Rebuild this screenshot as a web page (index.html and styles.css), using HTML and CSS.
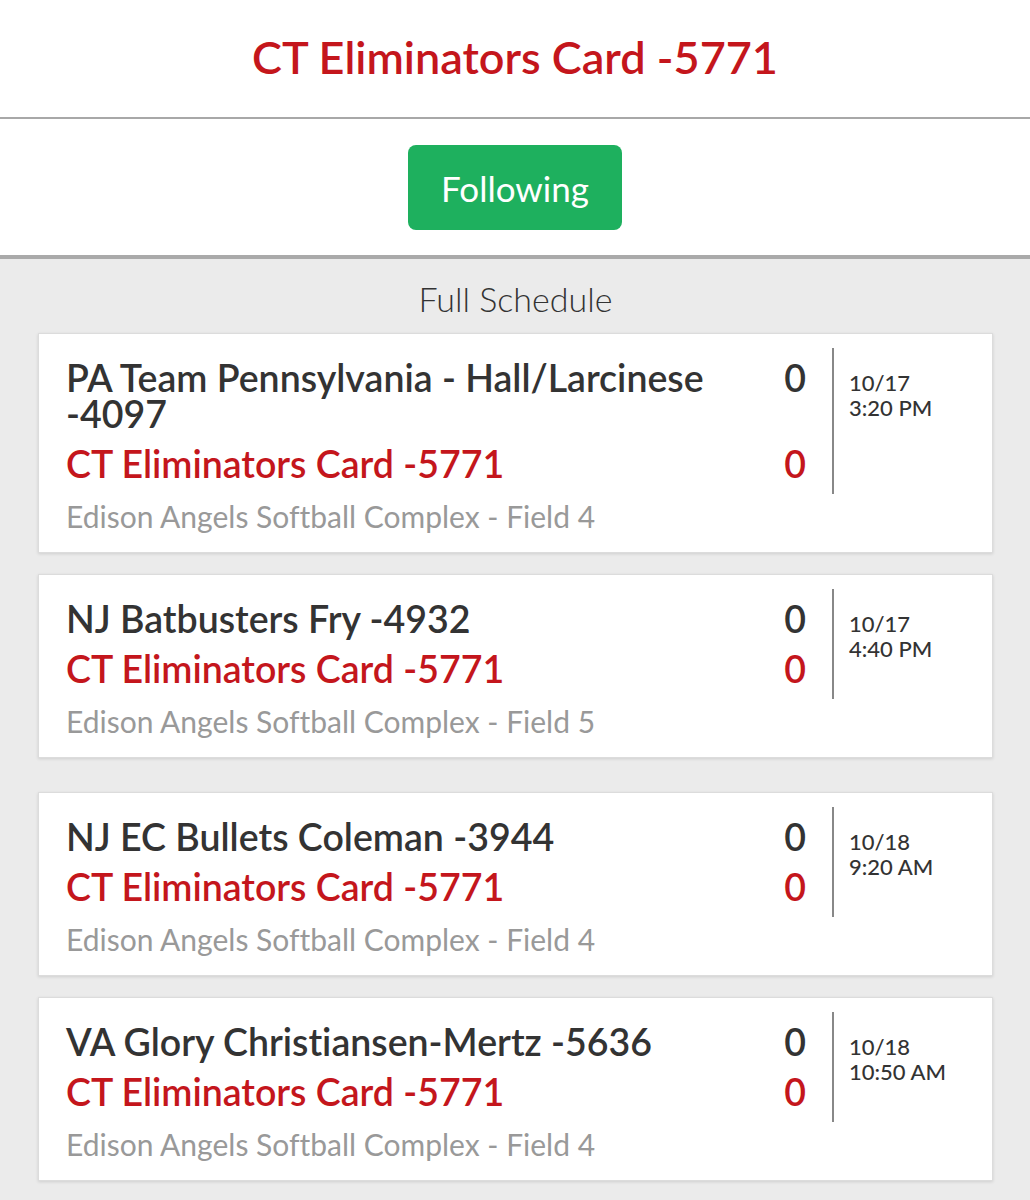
FILE: index.html
```html
<!DOCTYPE html>
<html lang="en">
<head>
  <meta charset="UTF-8" />
  <title>CT Eliminators Card -5771</title>
  <link rel="stylesheet" href="styles.css">
</head>
<body>

  <header class="team-header">
    <h1>CT Eliminators Card -5771</h1>
  </header>

  <div class="follow-bar">
    <button class="follow-btn">Following</button>
  </div>

  <main class="schedule">
    <h2>Full Schedule</h2>

    <div class="game">
      <div class="game-grid">
        <div class="team">PA Team Pennsylvania - Hall/Larcinese -4097</div>
        <div class="score">0</div>
        <div class="when">10/17<br>3:20 PM</div>
        <div class="team mine">CT Eliminators Card -5771</div>
        <div class="score mine">0</div>
      </div>
      <div class="venue">Edison Angels Softball Complex - Field 4</div>
    </div>

    <div class="game">
      <div class="game-grid">
        <div class="team">NJ Batbusters Fry -4932</div>
        <div class="score">0</div>
        <div class="when">10/17<br>4:40 PM</div>
        <div class="team mine">CT Eliminators Card -5771</div>
        <div class="score mine">0</div>
      </div>
      <div class="venue">Edison Angels Softball Complex - Field 5</div>
    </div>

    <div class="day-gap"></div>

    <div class="game">
      <div class="game-grid">
        <div class="team">NJ EC Bullets Coleman -3944</div>
        <div class="score">0</div>
        <div class="when">10/18<br>9:20 AM</div>
        <div class="team mine">CT Eliminators Card -5771</div>
        <div class="score mine">0</div>
      </div>
      <div class="venue">Edison Angels Softball Complex - Field 4</div>
    </div>

    <div class="game">
      <div class="game-grid">
        <div class="team">VA Glory Christiansen-Mertz -5636</div>
        <div class="score">0</div>
        <div class="when">10/18<br>10:50 AM</div>
        <div class="team mine">CT Eliminators Card -5771</div>
        <div class="score mine">0</div>
      </div>
      <div class="venue">Edison Angels Softball Complex - Field 4</div>
    </div>
  </main>

</body>
</html>
```

FILE: styles.css
```css
body {
  font-family: Lato, 'Noto Sans', sans-serif;
  font-variant-ligatures: no-common-ligatures;
  margin: 0;
  background-color: #ebebeb;
  color: #333;
}
.team-header {
  background-color: #fff;
  height: 117px;
  border-bottom: 2px solid #a8a8a8;
  display: flex;
  align-items: center;
  justify-content: center;
}
.team-header h1 {
  margin: 0 0 4px 0;
  font-size: 45px;
  font-weight: 600;
  color: #c4161c;
}
.follow-bar {
  background-color: #fff;
  height: 136px;
  border-bottom: 4px solid #aaa;
  display: flex;
  justify-content: center;
  align-items: flex-start;
}
.follow-btn {
  margin-top: 26px;
  width: 214px;
  height: 85px;
  border: none;
  border-radius: 8px;
  background-color: #1eb05e;
  color: #fff;
  font-family: inherit;
  font-size: 35px;
  font-weight: 400;
  padding: 0;
}
.schedule {
  padding: 20px 37px 20px 38px;
}
.schedule h2 {
  margin: 0 0 14px 0;
  text-align: center;
  font-size: 34px;
  font-weight: 300;
  line-height: 40px;
  color: #333;
}
.game {
  background-color: #fff;
  border: 1px solid #dcdcdc;
  box-shadow: 0 1px 3px rgba(0,0,0,0.12);
  padding: 14px 0 18px 27px;
  margin-bottom: 21px;
}
.day-gap {
  height: 13px;
}
.game-grid {
  display: grid;
  grid-template-columns: 1fr 60px 160px;
}
.team,
.score {
  font-size: 37.5px;
  font-weight: 600;
  line-height: 36px;
  padding: 12px 0 7px 0;
  color: #333;
}
.score {
  padding-right: 26px;
  text-align: right;
}
.team.mine,
.score.mine {
  padding: 7px 0 12px 0;
  color: #c4161c;
}
.score.mine {
  padding-right: 26px;
}
.when {
  grid-row: span 2;
  border-left: 2px solid #888;
  padding: 22px 0 0 15px;
  font-size: 22px;
  font-weight: 500;
  line-height: 25px;
  color: #333;
}
.venue {
  margin-top: 4px;
  font-size: 30px;
  line-height: 36px;
  color: #999;
}
```
